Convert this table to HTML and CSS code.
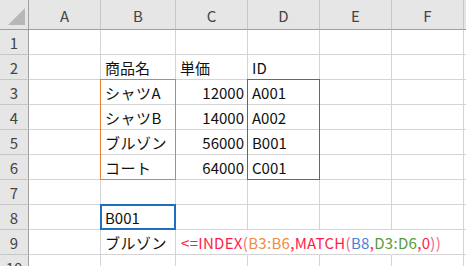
FILE: index.html
```html
<!DOCTYPE html>
<html lang="ja">
<head>
    <meta charset="UTF-8">
    <title>INDEX MATCH</title>
    <link rel="stylesheet" href="styles.css">
</head>
<body>
    <div class="book">
        <div class="sheet">
            <!-- column headers -->
            <div class="corner"><span class="corner-mark"></span></div>
            <div class="col-head">A</div>
            <div class="col-head">B</div>
            <div class="col-head">C</div>
            <div class="col-head">D</div>
            <div class="col-head">E</div>
            <div class="col-head">F</div>
            <div class="col-head last"></div>

            <div class="row-head">1</div>
            <div class="cell"></div><div class="cell"></div><div class="cell"></div><div class="cell"></div><div class="cell"></div><div class="cell"></div><div class="cell last"></div>

            <div class="row-head">2</div>
            <div class="cell"></div>
            <div class="cell">商品名</div>
            <div class="cell">単価</div>
            <div class="cell">ID</div>
            <div class="cell"></div><div class="cell"></div><div class="cell last"></div>

            <div class="row-head">3</div>
            <div class="cell"></div>
            <div class="cell kana">シャツA</div>
            <div class="cell num">12000</div>
            <div class="cell">A001</div>
            <div class="cell"></div><div class="cell"></div><div class="cell last"></div>

            <div class="row-head">4</div>
            <div class="cell"></div>
            <div class="cell kana">シャツB</div>
            <div class="cell num">14000</div>
            <div class="cell">A002</div>
            <div class="cell"></div><div class="cell"></div><div class="cell last"></div>

            <div class="row-head">5</div>
            <div class="cell"></div>
            <div class="cell kana">ブルゾン</div>
            <div class="cell num">56000</div>
            <div class="cell">B001</div>
            <div class="cell"></div><div class="cell"></div><div class="cell last"></div>

            <div class="row-head">6</div>
            <div class="cell"></div>
            <div class="cell kana">コート</div>
            <div class="cell num">64000</div>
            <div class="cell">C001</div>
            <div class="cell"></div><div class="cell"></div><div class="cell last"></div>

            <div class="row-head">7</div>
            <div class="cell"></div><div class="cell"></div><div class="cell"></div><div class="cell"></div><div class="cell"></div><div class="cell"></div><div class="cell last"></div>

            <div class="row-head">8</div>
            <div class="cell"></div>
            <div class="cell">B001</div>
            <div class="cell"></div><div class="cell"></div><div class="cell"></div><div class="cell"></div><div class="cell last"></div>

            <div class="row-head">9</div>
            <div class="cell"></div>
            <div class="cell kana">ブルゾン</div>
            <div class="cell spill formula"><span class="f-red">&lt;=INDEX</span><span class="f-paren1">(</span><span class="f-orange">B3:B6</span><span class="f-red">,MATCH</span><span class="f-paren2">(</span><span class="f-blue">B8</span><span class="f-red">,</span><span class="f-green">D3:D6</span><span class="f-red">,0</span><span class="f-paren2">)</span><span class="f-paren1">)</span></div>
            <div class="cell spill"></div>
            <div class="cell spill"></div>
            <div class="cell"></div><div class="cell last"></div>

            <div class="row-head">10</div>
            <div class="cell"></div><div class="cell"></div><div class="cell"></div><div class="cell"></div><div class="cell"></div><div class="cell"></div><div class="cell last"></div>
        </div>

        <!-- range outlines, laid on the same grid above the cells -->
        <div class="ranges">
            <div class="range range-names"></div>
            <div class="range range-ids"></div>
            <div class="range range-key"></div>
        </div>
    </div>
</body>
</html>
```

FILE: styles.css
```css
* {
    box-sizing: border-box;
}
body {
    margin: 0;
    background: white;
    font-family: "Noto Sans CJK JP", "Liberation Sans", sans-serif;
    font-size: 15px;
    color: #111;
    overflow: hidden;
}
.book {
    display: grid;
    height: 266px;
    overflow: hidden;
}
.sheet,
.ranges {
    grid-area: 1 / 1;
    display: grid;
    grid-template-columns: 29px 72px 75px 72px 72px 72px 72px 1fr;
    grid-template-rows: 30px repeat(10, 25px);
}
.ranges {
    pointer-events: none;
}
.corner {
    background: #e6e6e6;
    border-right: 1px solid #9f9f9f;
    border-bottom: 1px solid #9f9f9f;
    display: flex;
    align-items: flex-end;
    justify-content: flex-end;
    padding: 0 3px 4px 0;
}
.corner-mark {
    width: 17px;
    height: 17px;
    background: #b7b7b7;
    clip-path: polygon(100% 0, 100% 100%, 0 100%);
}
.col-head {
    background: #e6e6e6;
    color: #444;
    border-right: 1px solid #c6c6c6;
    border-bottom: 1px solid #9f9f9f;
    display: flex;
    align-items: center;
    justify-content: center;
    padding-top: 2px;
}
.col-head.last {
    border-right: none;
}
.row-head {
    background: #e6e6e6;
    color: #444;
    border-right: 1px solid #9f9f9f;
    border-bottom: 1px solid #c6c6c6;
    display: flex;
    align-items: center;
    justify-content: center;
}
.cell {
    border-right: 1px solid #d4d4d4;
    border-bottom: 1px solid #d4d4d4;
    display: flex;
    align-items: center;
    padding: 0 3px 0 4px;
    white-space: nowrap;
}
.cell.last {
    border-right: none;
}
.kana {
    letter-spacing: 0.5px;
}
.num {
    justify-content: flex-end;
}
.spill {
    border-right-color: transparent;
}
.formula {
    overflow: visible;
    padding-left: 5px;
    padding-top: 1px;
    letter-spacing: 0.3px;
}
.f-red { color: #ff1d4a; }
.f-paren1 { color: #f5706f; }
.f-paren2 { color: #ea5ca0; }
.f-orange { color: #f08b44; }
.f-blue { color: #4a7fd8; }
.f-green { color: #5a9a3c; }

/* highlighted ranges */
.range {
    margin: -1px 0 0 -1px;
}
.range-names {
    grid-column: 3;
    grid-row: 4 / 8;
    border: 1px solid #ed7d31;
}
.range-ids {
    grid-column: 5;
    grid-row: 4 / 8;
    border: 1px solid #4f7f2b;
}
.range-key {
    grid-column: 3;
    grid-row: 9;
    border: 2px solid #1f6fc0;
}
```
